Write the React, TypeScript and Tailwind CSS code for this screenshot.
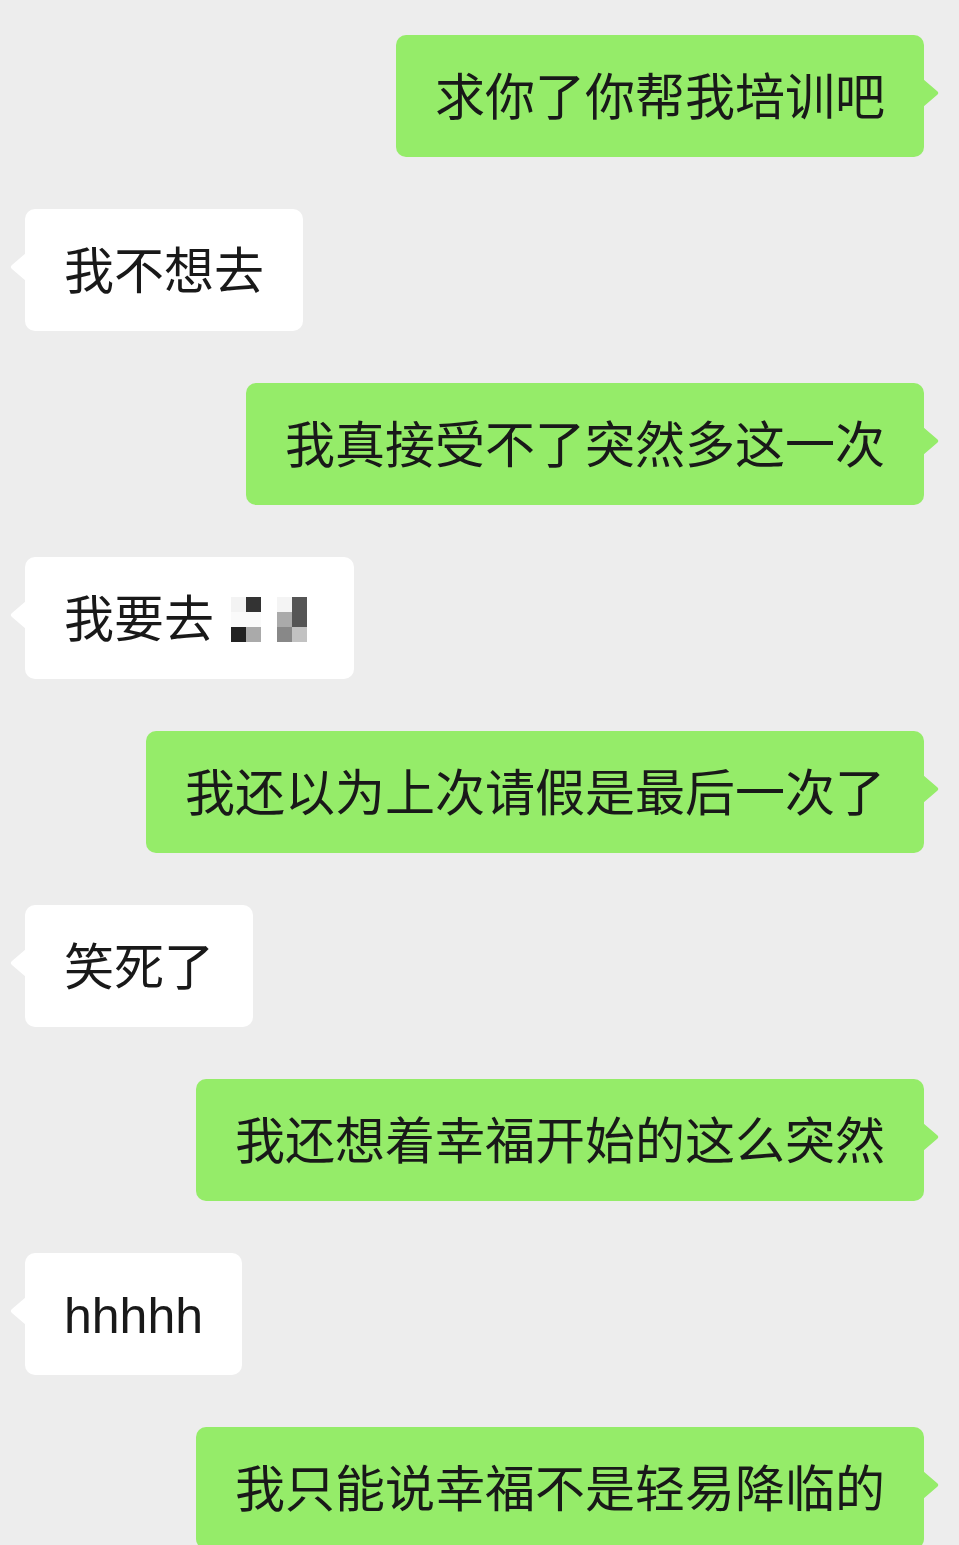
import React from "react";

type Msg = { side: "left" | "right"; text: string; mosaic?: boolean };

const messages: Msg[] = [
  { side: "right", text: "求你了你帮我培训吧" },
  { side: "left", text: "我不想去" },
  { side: "right", text: "我真接受不了突然多这一次" },
  { side: "left", text: "我要去", mosaic: true },
  { side: "right", text: "我还以为上次请假是最后一次了" },
  { side: "left", text: "笑死了" },
  { side: "right", text: "我还想着幸福开始的这么突然" },
  { side: "left", text: "hhhhh" },
  { side: "right", text: "我只能说幸福不是轻易降临的" },
];

// grey levels for the blurred part, 3 rows x 2 cols per group
const mosaicLeft = ["#f3f3f3", "#333333", "#fafafa", "#fafafa", "#222222", "#aaaaaa"];
const mosaicRight = ["#f4f4f4", "#555555", "#aaaaaa", "#555555", "#888888", "#c2c2c2"];

function Mosaic() {
  return (
    <span className="inline-flex h-[50px] w-[101px] items-start gap-[16px] pl-[17px] pt-[2px] align-top">
      {[mosaicLeft, mosaicRight].map((cells, i) => (
        <span key={i} className="grid grid-cols-[15px_15px] grid-rows-[15px_15px_15px]">
          {cells.map((c, j) => (
            <span key={j} className="block h-[15px] w-[15px]" style={{ backgroundColor: c }} />
          ))}
        </span>
      ))}
    </span>
  );
}

function Bubble({ msg }: { msg: Msg }) {
  const right = msg.side === "right";
  return (
    <div className={right ? "flex justify-end pr-[35px]" : "flex justify-start pl-[25px]"}>
      <div
        className={
          "relative rounded-[10px] px-[39px] pt-[38px] pb-[34px] text-[50px] leading-[50px] whitespace-nowrap text-[#191919] " +
          (right ? "bg-[#95ec69]" : "bg-white")
        }
      >
        {msg.text}
        {msg.mosaic && <Mosaic />}
        {right ? (
          <svg className="absolute right-[-16px] top-[44px]" width="17" height="28" viewBox="0 0 17 28">
            <path d="M0 0 L14 12 Q16.5 14 14 16 L0 28 Z" fill="#95ec69" />
          </svg>
        ) : (
          <svg className="absolute left-[-16px] top-[44px]" width="17" height="28" viewBox="0 0 17 28">
            <path d="M17 0 L3 12 Q0.5 14 3 16 L17 28 Z" fill="#ffffff" />
          </svg>
        )}
      </div>
    </div>
  );
}

export default function App() {
  return (
    <div className="h-[1545px] w-[959px] overflow-hidden bg-[#ededed] font-['Liberation_Sans','Noto_Sans_CJK_SC',sans-serif]">
      <div className="flex flex-col gap-[52px] pt-[35px]">
        {messages.map((m, i) => (
          <Bubble key={i} msg={m} />
        ))}
      </div>
    </div>
  );
}
